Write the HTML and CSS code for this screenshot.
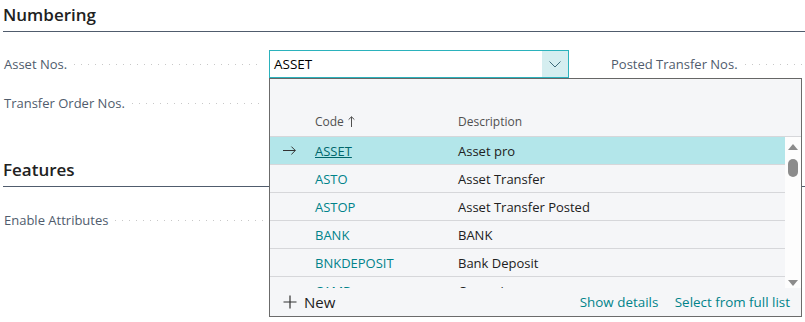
FILE: index.html
```html
<!DOCTYPE html>
<html lang="en">

<head>
    <meta charset="UTF-8">
    <meta name="viewport" content="width=device-width, initial-scale=1.0">
    <title>Setup</title>
    <link rel="stylesheet" href="styles.css">
</head>

<body>
    <div class="page">
        <section class="group">
            <h2 class="group-title">Numbering</h2>
            <div class="fields">
                <div class="field">
                    <span class="label">Asset Nos.</span>
                    <span class="leader"></span>
                    <div class="lookup">
                        <div class="lookup-input">
                            <span class="lookup-value">ASSET</span>
                            <span class="lookup-btn">
                                <svg width="12" height="7" viewBox="0 0 12 7">
                                    <path d="M0.5 0.5 L6 6 L11.5 0.5" fill="none" stroke="#3d6b7a" stroke-width="1"/>
                                </svg>
                            </span>
                        </div>
                        <!-- popup list -->
                        <div class="dropdown">
                            <div class="dd-head">
                                <span class="col-mark"></span>
                                <span class="col-code">Code
                                    <svg class="sort" width="7" height="11" viewBox="0 0 7 11">
                                        <path d="M3.5 0.8 V11 M0.6 3.6 L3.5 0.8 L6.4 3.6" fill="none" stroke="#505050" stroke-width="1"/>
                                    </svg>
                                </span>
                                <span class="col-desc">Description</span>
                            </div>
                            <div class="dd-body">
                                <div class="dd-rows">
                                    <div class="dd-row selected">
                                        <span class="col-mark">
                                            <svg width="13" height="9" viewBox="0 0 13 9">
                                                <path d="M0 4.5 H12.3 M8.4 0.6 L12.3 4.5 L8.4 8.4" fill="none" stroke="#333" stroke-width="1"/>
                                            </svg>
                                        </span>
                                        <span class="col-code"><a href="#">ASSET</a></span>
                                        <span class="col-desc">Asset pro</span>
                                    </div>
                                    <div class="dd-row">
                                        <span class="col-mark"></span>
                                        <span class="col-code">ASTO</span>
                                        <span class="col-desc">Asset Transfer</span>
                                    </div>
                                    <div class="dd-row">
                                        <span class="col-mark"></span>
                                        <span class="col-code">ASTOP</span>
                                        <span class="col-desc">Asset Transfer Posted</span>
                                    </div>
                                    <div class="dd-row">
                                        <span class="col-mark"></span>
                                        <span class="col-code">BANK</span>
                                        <span class="col-desc">BANK</span>
                                    </div>
                                    <div class="dd-row">
                                        <span class="col-mark"></span>
                                        <span class="col-code">BNKDEPOSIT</span>
                                        <span class="col-desc">Bank Deposit</span>
                                    </div>
                                    <div class="dd-row">
                                        <span class="col-mark"></span>
                                        <span class="col-code">CAMP</span>
                                        <span class="col-desc">Campaign</span>
                                    </div>
                                </div>
                                <div class="scrollbar">
                                    <span class="arrow-up"></span>
                                    <span class="thumb"></span>
                                    <span class="spacer"></span>
                                    <span class="arrow-down"></span>
                                </div>
                            </div>
                            <div class="dd-foot">
                                <span class="new">
                                    <svg width="14" height="14" viewBox="0 0 14 14">
                                        <path d="M7 0.5 V13.5 M0.5 7 H13.5" stroke="#333" stroke-width="1.2" fill="none"/>
                                    </svg>
                                    New
                                </span>
                                <span class="links">
                                    <a href="#">Show details</a>
                                    <a href="#">Select from full list</a>
                                </span>
                            </div>
                        </div>
                    </div>
                </div>
                <div class="field right">
                    <span class="label">Posted Transfer Nos.</span>
                    <span class="leader"></span>
                </div>
                <div class="field">
                    <span class="label">Transfer Order Nos.</span>
                    <span class="leader"></span>
                </div>
            </div>
        </section>

        <section class="group features">
            <h2 class="group-title">Features</h2>
            <div class="fields">
                <div class="field">
                    <span class="label">Enable Attributes</span>
                    <span class="leader"></span>
                </div>
            </div>
        </section>
    </div>
</body>

</html>
```

FILE: styles.css
```css
* {
    margin: 0;
    padding: 0;
    box-sizing: border-box;
}

html,
body {
    height: 100%;
}

body {
    font-family: "Open Sans", "Noto Sans", sans-serif;
    font-size: 13px;
    color: #212121;
    background: #fff;
}

.page {
    min-height: 322px;
    padding-left: 3px;
}

.group-title {
    height: 32px;
    font-size: 17px;
    font-weight: 600;
    line-height: 30px;
    color: #212121;
    border-bottom: 1px solid #505c6d;
}

.fields {
    display: grid;
    grid-template-columns: 607px 1fr;
    row-gap: 11px;
    margin-top: 18px;
}

.features {
    margin-top: 38px;
}

.features .fields {
    margin-top: 19px;
}

.field {
    display: flex;
    align-items: center;
    height: 28px;
}

.label {
    padding-left: 1px;
    color: #505c6d;
    white-space: nowrap;
}

.leader {
    flex: 1 1 auto;
    height: 1px;
    margin-left: 7px;
    background-image: linear-gradient(to right, #c8c8c8 1px, transparent 1px);
    background-size: 7px 1px;
}

.field:not(.right) {
    width: 566px;
}

.field:not(.right) .leader {
    margin-right: 8px;
}

.field:not(.right) .leader:last-child {
    margin-right: 305px;
}

.right .leader {
    margin-right: -10px;
}

.lookup {
    position: relative;
    width: 300px;
    height: 28px;
}

.lookup-input {
    display: flex;
    height: 28px;
    border: 1px solid #2bb2bc;
    background: #fff;
}

.lookup-value {
    flex: 1;
    padding-left: 4px;
    font-size: 13.5px;
    line-height: 26px;
    color: #000;
}

.lookup-btn {
    width: 26px;
    display: flex;
    align-items: center;
    justify-content: center;
    background: #d5eef0;
}

.dropdown {
    position: absolute;
    left: 0;
    top: 28px;
    width: 533px;
    height: 239px;
    background: #f5f6f8;
    border: 1px solid #6b6b6b;
    border-top-color: #666;
    display: flex;
    flex-direction: column;
    z-index: 5;
}

.dd-head {
    display: flex;
    align-items: center;
    flex: 0 0 58px;
    padding-top: 28px;
    font-size: 12px;
    color: #505050;
    border-bottom: 1px solid #d6d7da;
}

.col-mark {
    display: flex;
    align-items: center;
    width: 45px;
    padding-left: 13px;
}

.col-code {
    width: 143px;
    color: #00838a;
}

.dd-head .col-code {
    color: #505050;
}

.sort {
    margin-left: 1px;
    vertical-align: -1px;
}

.col-desc {
    color: #212121;
}

.dd-head .col-desc {
    color: #505050;
}

.dd-body {
    display: flex;
    flex: 0 0 151px;
    overflow: hidden;
}

.dd-rows {
    flex: 1;
}

.dd-row {
    display: flex;
    align-items: center;
    height: 28px;
    border-bottom: 1px solid #d6d7da;
}

.dd-row.selected {
    background: #b3e6ea;
}

.dd-row a {
    color: #00666b;
    text-decoration: underline;
}

.scrollbar {
    width: 16px;
    background: #fdfdfd;
    display: flex;
    flex-direction: column;
    align-items: center;
    padding-top: 7px;
}

.arrow-up {
    width: 0;
    height: 0;
    border-left: 5px solid transparent;
    border-right: 5px solid transparent;
    border-bottom: 6px solid #8c8c8c;
}

.thumb {
    width: 10px;
    height: 18px;
    margin-top: 9px;
    border-radius: 5px;
    background: #8c8c8c;
}

.spacer {
    flex: 1;
}

.arrow-down {
    width: 0;
    height: 0;
    margin-bottom: 2px;
    border-left: 5px solid transparent;
    border-right: 5px solid transparent;
    border-top: 6px solid #8c8c8c;
}

.dd-foot {
    flex: 1;
    display: flex;
    align-items: center;
    justify-content: space-between;
    padding: 0 11px 0 13px;
}

.new {
    display: flex;
    align-items: center;
    gap: 7px;
    font-size: 15px;
    color: #212121;
}

.links {
    font-size: 13.4px;
}

.links a {
    margin-left: 13px;
    color: #00838a;
    text-decoration: none;
}
```
